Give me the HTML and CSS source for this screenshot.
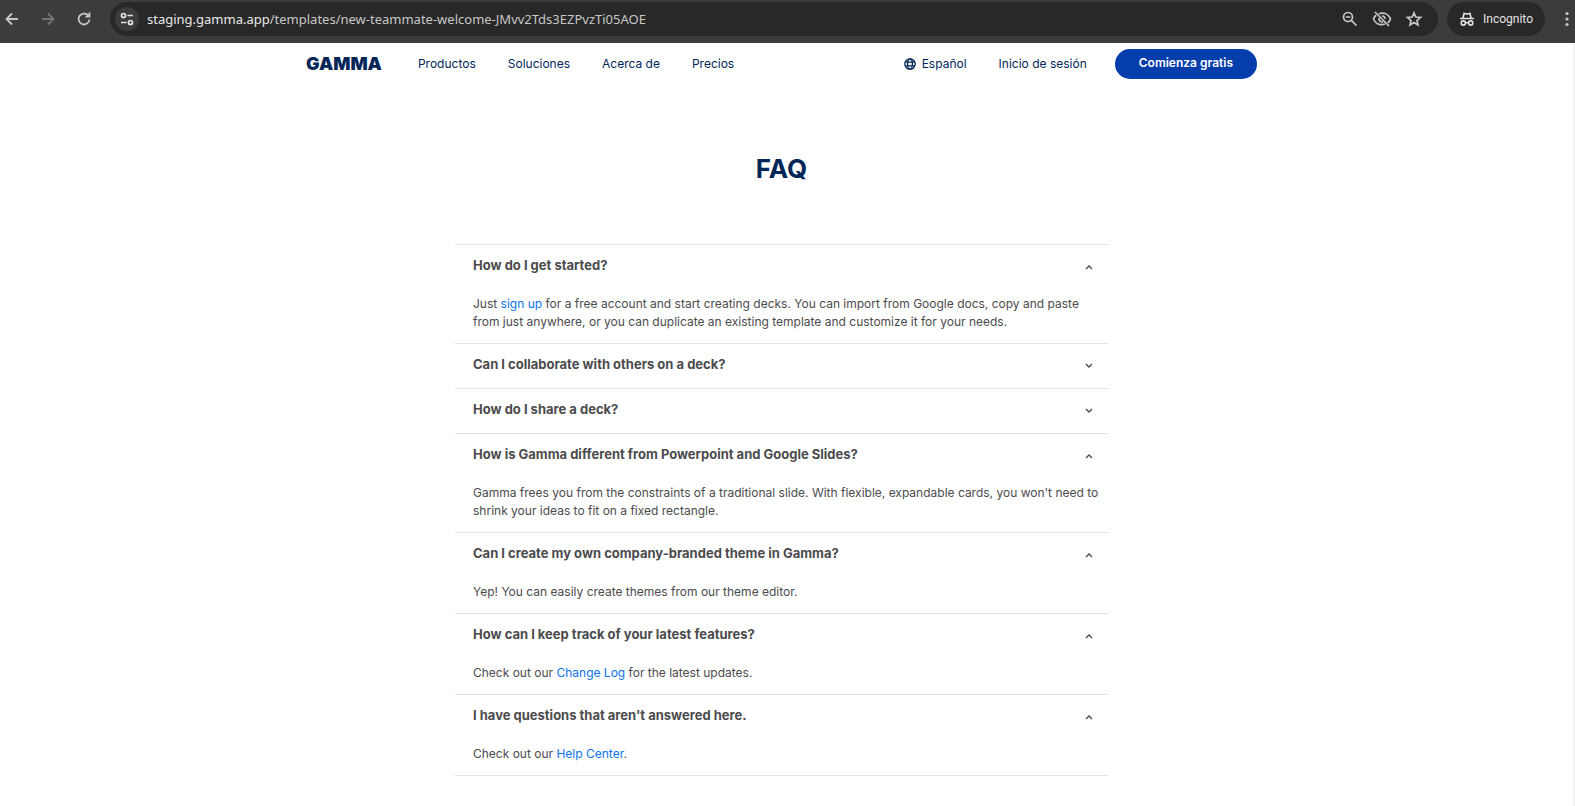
FILE: index.html
```html
<!DOCTYPE html>
<html lang="es">
<head>
<meta charset="utf-8">
<meta name="viewport" content="width=device-width, initial-scale=1">
<title>Gamma – FAQ</title>
<link rel="stylesheet" href="styles.css">
</head>
<body>
<div class="toolbar">
  <button class="tool tool-back" aria-label="Back"><svg viewBox="0 0 16 16"><path d="M14 8H3M8 2.500L2.500 8L8 13.500"/></svg></button>
  <button class="tool tool-forward" aria-label="Forward"><svg viewBox="0 0 16 16"><path d="M2 8H13M8 2.500L13.500 8L8 13.500"/></svg></button>
  <button class="tool tool-reload" aria-label="Reload"><svg viewBox="0 0 16 16"><path d="M13.500 8.500A5.500 5.500 0 1 1 12 4.200L13.500 5.500M13.500 1.500V5.700H9.300"/></svg></button>
  <div class="omnibox">
    <button class="site-info" aria-label="Site information"><svg viewBox="0 0 16 16"><circle cx="4.500" cy="4.500" r="2"/><path d="M8.500 4.500H14M2 11.500H7.500"/><circle cx="11.500" cy="11.500" r="2"/></svg></button>
    <div class="address"><span class="host">staging.gamma.app</span>/templates/new-teammate-welcome-JMvv2Tds3EZPvzTi05AOE</div>
    <button class="omni-tool" aria-label="Zoom"><svg viewBox="0 0 20 16"><circle cx="8" cy="6" r="4.500"/><path d="M5.800 6H10.200M11.300 9.300L16.500 14.500"/></svg></button>
    <button class="omni-tool" aria-label="Third-party cookies blocked"><svg viewBox="0 0 20 16"><path d="M7 2.700C13 1 17 4 18.500 8C18 9.500 17 10.800 15.800 11.700M13 13C7 14.700 3 12 1.500 8C2 6.500 3 5.200 4.200 4.300M3 1L17 15M10 5A3 3 0 0 1 13 8M7.200 7A3 3 0 0 0 11 10.800"/></svg></button>
    <button class="omni-tool" aria-label="Bookmark"><svg viewBox="0 0 20 16"><path d="M10 1.800L11.800 6L16.500 6.400L13 9.500L14 14L10 11.600L6 14L7 9.500L3.500 6.400L8.200 6Z"/></svg></button>
  </div>
  <button class="incognito"><svg viewBox="0 0 16 16"><path d="M1 7.500H15M4 7L5 2.500L8 3L11 2.500L12 7M6.500 12Q8 11 9.500 12"/><circle cx="4.300" cy="12" r="2.100"/><circle cx="11.700" cy="12" r="2.100"/></svg>Incognito</button>
  <button class="tool menu" aria-label="Menu"><svg viewBox="0 0 16 16"><circle cx="8" cy="2.500" r="1.600"/><circle cx="8" cy="8" r="1.600"/><circle cx="8" cy="13.500" r="1.600"/></svg></button>
</div>

<div class="page">
  <header class="site-header">
    <a class="logo" href="#">GAMMA</a>
    <nav class="nav">
      <a href="#">Productos</a>
      <a href="#">Soluciones</a>
      <a href="#">Acerca de</a>
      <a href="#">Precios</a>
    </nav>
    <div class="actions">
      <button class="language"><svg viewBox="0 0 12 12"><circle cx="6" cy="6" r="5.200"/><ellipse cx="6" cy="6" rx="2.400" ry="5.200"/><path d="M1.200 4.200H10.800M1.200 7.800H10.800"/></svg>Español</button>
      <a href="#">Inicio de sesión</a>
      <a class="cta" href="#">Comienza gratis</a>
    </div>
  </header>

  <main class="faq">
    <h1>FAQ</h1>
    <div class="accordion">
      <details open>
        <summary>How do I get started?<svg viewBox="0 0 8 8"><path d="M1 6L4 3L7 6"/></svg></summary>
        <p>Just <a href="#">sign up</a> for a free account and start creating decks. You can import from Google docs, copy and paste from just anywhere, or you can duplicate an existing template and customize it for your needs.</p>
      </details>
      <details>
        <summary>Can I collaborate with others on a deck?<svg viewBox="0 0 8 8"><path d="M1 6L4 3L7 6"/></svg></summary>
      </details>
      <details>
        <summary>How do I share a deck?<svg viewBox="0 0 8 8"><path d="M1 6L4 3L7 6"/></svg></summary>
      </details>
      <details open>
        <summary>How is Gamma different from Powerpoint and Google Slides?<svg viewBox="0 0 8 8"><path d="M1 6L4 3L7 6"/></svg></summary>
        <p>Gamma frees you from the constraints of a traditional slide. With flexible, expandable cards, you won't need to shrink your ideas to fit on a fixed rectangle.</p>
      </details>
      <details open>
        <summary>Can I create my own company-branded theme in Gamma?<svg viewBox="0 0 8 8"><path d="M1 6L4 3L7 6"/></svg></summary>
        <p>Yep! You can easily create themes from our theme editor.</p>
      </details>
      <details open>
        <summary>How can I keep track of your latest features?<svg viewBox="0 0 8 8"><path d="M1 6L4 3L7 6"/></svg></summary>
        <p>Check out our <a href="#">Change Log</a> for the latest updates.</p>
      </details>
      <details open>
        <summary>I have questions that aren't answered here.<svg viewBox="0 0 8 8"><path d="M1 6L4 3L7 6"/></svg></summary>
        <p>Check out our <a href="#">Help Center</a>.</p>
      </details>
    </div>
  </main>
</div>
</body>
</html>
```
FILE: styles.css
```css
* {
  box-sizing: border-box;
}

body {
  margin: 0;
  min-height: 100vh;
  display: flex;
  flex-direction: column;
  background: #fff;
  font: 12px/18px Inter, sans-serif;
  color: #4b4b4d;
}

a {
  color: #0e73f0;
  text-decoration: none;
}

button {
  padding: 0;
  border: 0;
  background: none;
  color: inherit;
  font: inherit;
}

svg {
  flex: none;
  fill: none;
  stroke: currentColor;
}

/* Browser toolbar */
.toolbar {
  display: flex;
  align-items: center;
  height: 43px;
  padding: 2px 0 7px 4px;
  background: #3c3c3c;
  color: #c7c7c7;
  overflow: hidden;
}

.tool {
  display: flex;
  flex: none;
  width: 16px;
}

.tool svg {
  width: 16px;
  height: 16px;
  stroke-width: 1.8;
}

.tool-forward {
  margin-left: 20px;
  color: #757575;
}

.tool-reload {
  margin: 0 18px 0 20px;
}

.omnibox {
  display: flex;
  flex: 1;
  align-items: center;
  gap: 12px;
  height: 34px;
  padding: 0 14px 0 5px;
  border-radius: 17px;
  background: #282828;
}

.site-info {
  display: grid;
  place-items: center;
  flex: none;
  width: 24px;
  height: 24px;
  border-radius: 50%;
  background: #3c3c3c;
  color: #e3e3e3;
}

.site-info svg {
  width: 16px;
  height: 16px;
  stroke-width: 1.7;
}

.address {
  flex: 1;
  margin-left: -4px;
  font: 13px/20px "Noto Sans", sans-serif;
}

.host {
  color: #e8e8e8;
}

.omni-tool {
  display: flex;
}

.omni-tool svg {
  width: 20px;
  height: 16px;
  stroke-width: 1.7;
}

.incognito {
  display: flex;
  align-items: center;
  gap: 8px;
  height: 34px;
  margin-left: 9px;
  padding: 0 12px;
  border-radius: 17px;
  background: #282828;
  color: #e3e3e3;
  font: 12px/18px Roboto, sans-serif;
}

.incognito svg {
  width: 16px;
  height: 16px;
  stroke-width: 1.6;
}

.menu {
  margin: 0 0 0 14px;
}

.menu svg {
  fill: currentColor;
  stroke: none;
}

/* Page */
.page {
  flex: 1;
  padding-right: 10px;
  border-right: 2px solid #f1f1f1;
}

.site-header {
  display: flex;
  align-items: center;
  max-width: 951px;
  margin: 0 auto;
  padding-top: 6px;
}

.site-header a,
.language {
  color: #032659;
}

.site-header .logo {
  font-size: 18px;
  font-weight: 900;
}

.nav {
  display: flex;
  gap: 32px;
  margin-left: 36px;
}

.actions {
  display: flex;
  align-items: center;
  gap: 32px;
  margin-left: auto;
}

.language {
  display: flex;
  align-items: center;
  gap: 6px;
}

.language svg {
  width: 12px;
  height: 12px;
  stroke-width: 1.3;
}

.site-header .cta {
  margin-left: -4px;
  padding: 5px 24px 7px;
  border-radius: 15px;
  background: #043eac;
  color: #fff;
  font-weight: 600;
}

.faq {
  max-width: 653px;
  margin: 0 auto;
  padding-top: 72px;
}

h1 {
  margin: 0 0 57px;
  color: #032659;
  font-size: 26px;
  font-weight: 700;
  line-height: 36px;
  text-align: center;
}

.accordion {
  border-bottom: 1px solid #e2e2e2;
}

details {
  border-top: 1px solid #e2e2e2;
}

summary {
  display: flex;
  align-items: center;
  justify-content: space-between;
  padding: 9px 15px 13px 18px;
  font-size: 13px;
  font-weight: 700;
  line-height: 22px;
  list-style: none;
}

summary svg {
  width: 8px;
  height: 8px;
  margin-top: 4px;
  stroke-width: 1.4;
  transform: rotate(180deg);
}

details[open] summary svg {
  transform: none;
}

details p {
  margin: 0;
  padding: 6px 8px 12px 18px;
}
```
